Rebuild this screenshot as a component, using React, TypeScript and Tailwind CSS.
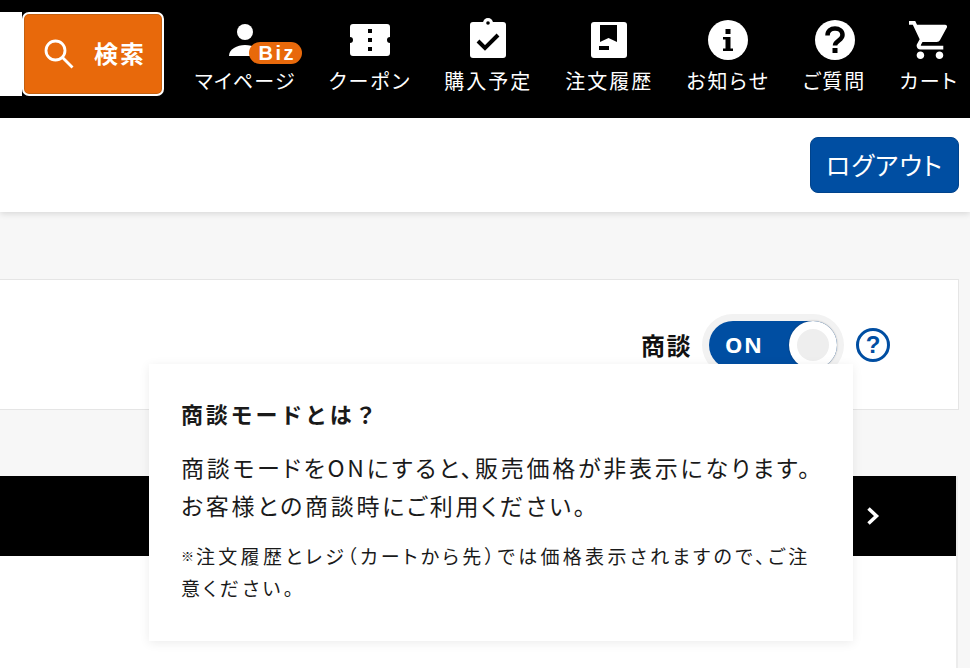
import React from 'react';

const FONT = "font-['Noto_Sans_CJK_JP','Noto_Sans',sans-serif]";

const BizUserIcon = () => (
  <div className="relative -mb-[4px] h-[44px] w-[74px] translate-x-[20px]">
    <svg viewBox="0 0 74 44" className="h-[44px] w-[74px]">
      <circle cx="17" cy="12" r="8" fill="#fff" />
      <path d="M1 36c0-7 8-11 16-11 6 0 12 2 14 6l-5 5z" fill="#fff" />
    </svg>
    <span className="absolute left-[21px] top-[22px] flex h-[22px] w-[53px] items-center justify-center rounded-full bg-[#e8690b] pl-[3px] font-['Liberation_Sans',sans-serif] text-[20px] font-bold tracking-[2.500px] text-white">
      Biz
    </span>
  </div>
);

const TicketIcon = () => (
  <svg viewBox="0 0 40 32" className="mb-[4px] h-[32px] w-[40px]">
    <path
      d="M3 0h34a3 3 0 0 1 3 3v10a3 3 0 0 0 0 6v10a3 3 0 0 1-3 3H3a3 3 0 0 1-3-3V19a3 3 0 0 0 0-6V3a3 3 0 0 1 3-3z"
      fill="#fff"
    />
    <rect x="18" y="5" width="4" height="4" fill="#000" />
    <rect x="18" y="14" width="4" height="4" fill="#000" />
    <rect x="18" y="23" width="4" height="4" fill="#000" />
  </svg>
);

const ClipboardIcon = () => (
  <svg viewBox="0 0 36 40" className="mb-[2px] h-[40px] w-[36px]">
    <rect x="0" y="4" width="36" height="36" rx="3" fill="#fff" />
    <circle cx="18" cy="5" r="5" fill="#fff" />
    <circle cx="18" cy="5" r="1.8" fill="#000" />
    <path d="M8 23l7 7 13-13" fill="none" stroke="#000" strokeWidth="4" />
  </svg>
);

const OrderIcon = () => (
  <svg viewBox="0 0 36 36" className="mb-[2px] h-[36px] w-[36px]">
    <rect width="36" height="36" rx="3" fill="#fff" />
    <path d="M9 3h17v17l-8.500-4L9 20z" fill="#000" />
    <rect x="8" y="24" width="10" height="4" fill="#000" />
  </svg>
);

const InfoIcon = () => (
  <svg viewBox="0 0 40 40" className="h-[40px] w-[40px]">
    <circle cx="20" cy="20" r="20" fill="#fff" />
    <rect x="17.500" y="9" width="5" height="5" fill="#000" />
    <rect x="17.500" y="17" width="5" height="14" fill="#000" />
    <rect x="15" y="17" width="5" height="2.500" fill="#000" />
    <rect x="15" y="28.500" width="10" height="2.500" fill="#000" />
  </svg>
);

const QuestionIcon = () => (
  <svg viewBox="0 0 40 40" className="h-[40px] w-[40px]">
    <circle cx="20" cy="20" r="20" fill="#fff" />
    <path
      d="M12.500 15.500c0-4.500 3.400-7 7.500-7s7.500 2.500 7.500 6.500c0 5.500-7.500 5.500-7.500 10.500"
      fill="none"
      stroke="#000"
      strokeWidth="4.500"
    />
    <rect x="17.500" y="28" width="5" height="5" fill="#000" />
  </svg>
);

const CartIcon = () => (
  <svg viewBox="1 2 21 20" className="h-[40px] w-[40px]">
    <path
      d="M7 18c-1.100 0-1.990.9-1.990 2S5.900 22 7 22s2-.9 2-2-.9-2-2-2zM1 2v2h2l3.600 7.590-1.350 2.450c-.16.28-.25.61-.25.96 0 1.100.9 2 2 2h12v-2H7.420c-.14 0-.25-.11-.25-.25l.03-.12.9-1.630h7.450c.75 0 1.410-.41 1.750-1.030l3.580-6.490c.08-.14.12-.31.12-.48 0-.55-.45-1-1-1H5.210l-.94-2H1zm16 16c-1.100 0-1.990.9-1.990 2s.89 2 1.990 2 2-.9 2-2-.9-2-2-2z"
      fill="#fff"
    />
  </svg>
);

const NavItem = ({ icon, label, tight }: { icon: React.ReactNode; label: string; tight?: boolean }) => (
  <div className="flex flex-col items-center">
    <div className="flex h-[44px] items-end justify-center">{icon}</div>
    <span
      className={`mt-[7px] whitespace-nowrap text-[20px] leading-[28px] text-white [font-feature-settings:'palt'] ${
        tight ? 'tracking-[1.200px]' : 'tracking-[2px]'
      }`}
    >
      {label}
    </span>
  </div>
);

export default function App() {
  return (
    <div className={`relative h-[668px] w-[970px] overflow-hidden bg-[#f7f7f7] ${FONT}`}>
      <header className="flex h-[118px] items-start justify-between bg-black pr-[11px]">
        <div className="mt-[12px] flex h-[84px]">
          <div className="w-[22px] bg-white" />
          <button className="flex h-[84px] w-[142px] items-center rounded-[7px] border-2 border-white bg-[#e8690b] pl-[19px] shadow-[inset_0_0_0_1px_#c4600f]">
            <svg viewBox="0 0 32 32" className="h-[32px] w-[32px]">
              <circle cx="12.500" cy="12.500" r="9.500" fill="none" stroke="#fff" strokeWidth="2.800" />
              <path d="M19.500 19.500l10 10" stroke="#fff" strokeWidth="2.800" />
            </svg>
            <span className="-mt-[2px] ml-[19px] text-[24px] font-bold tracking-[2px] text-white">検索</span>
          </button>
        </div>
        <nav className="mt-[16px] flex gap-[33px]">
          <NavItem icon={<BizUserIcon />} label="マイページ" tight />
          <NavItem icon={<TicketIcon />} label="クーポン" />
          <NavItem icon={<ClipboardIcon />} label="購入予定" />
          <NavItem icon={<OrderIcon />} label="注文履歴" />
          <NavItem icon={<InfoIcon />} label="お知らせ" />
          <NavItem icon={<QuestionIcon />} label="ご質問" />
          <NavItem icon={<CartIcon />} label="カート" />
        </nav>
      </header>

      <div className="flex h-[94px] items-start justify-end bg-white pr-[11px] pt-[19px] shadow-[0_2px_6px_rgba(0,0,0,0.12)]">
        <button className="flex h-[56px] w-[149px] items-center justify-center rounded-[8px] border border-[#00438c] bg-[#004ea2] text-[25px] tracking-[1px] text-white [font-feature-settings:'palt']">
          ログアウト
        </button>
      </div>

      <section className="mr-[11px] mt-[67px] flex h-[131px] items-center justify-end border border-l-0 border-[#e5e5e5] bg-white pr-[68px]">
        <span className="mr-[17px] text-[24px] font-bold tracking-[1.500px] text-[#111]">商談</span>
        <div className="relative flex h-[48px] w-[128px] items-center rounded-full bg-[#004ea2] pl-[16px] shadow-[0_0_0_7px_#f2f2f2]">
          <span className="font-['Noto_Sans',sans-serif] text-[22px] font-bold tracking-[1.500px] text-white">ON</span>
          <span className="absolute right-0 top-0 flex h-[48px] w-[48px] items-center justify-center rounded-full bg-white shadow-[0_0_2px_rgba(0,0,0,0.35)]">
            <span className="h-[32px] w-[32px] rounded-full bg-[#eeeeee]" />
          </span>
        </div>
        <span className="ml-[19px] flex h-[34px] w-[34px] items-center justify-center rounded-full border-[3px] border-[#004ea2] font-['Liberation_Sans',sans-serif] text-[24px] font-bold text-[#004ea2]">
          ?
        </span>
      </section>

      <section className="mr-[12px] mt-[66px] h-[200px] border-r-2 border-[#ececec] bg-white">
        <div className="flex h-[80px] items-center justify-end bg-black pr-[76px]">
          <svg viewBox="0 0 14 20" className="h-[20px] w-[14px]">
            <path d="M2.500 2.500l8 7.500-8 7.500" fill="none" stroke="#fff" strokeWidth="3.500" />
          </svg>
        </div>
      </section>

      {/* popover sits over the toggle and both cards */}
      <div className="absolute left-[149px] top-[364px] h-[277px] w-[704px] bg-white pl-[32px] pt-[33px] text-[#1a1a1a] shadow-[0_2px_10px_rgba(0,0,0,0.08)]">
        <h3 className="text-[22px] font-bold leading-[32px] tracking-[2.800px]">商談モードとは？</h3>
        <p className="mt-[19px] whitespace-nowrap text-[23px] leading-[38px] tracking-[2.750px] [font-feature-settings:'palt']">
          商談モードをONにすると、販売価格が非表示になります。
          <br />
          お客様との商談時にご利用ください。
        </p>
        <div className="mt-[16px] text-[19px] leading-[32px] tracking-[3.300px] [font-feature-settings:'palt']">
          <div className="flex items-center whitespace-nowrap">
            <span className="w-[15px] text-[13px] font-bold tracking-normal">※</span>
            <span>注文履歴とレジ（カートから先）では価格表示されますので、ご注</span>
          </div>
          <div>意ください。</div>
        </div>
      </div>
    </div>
  );
}
